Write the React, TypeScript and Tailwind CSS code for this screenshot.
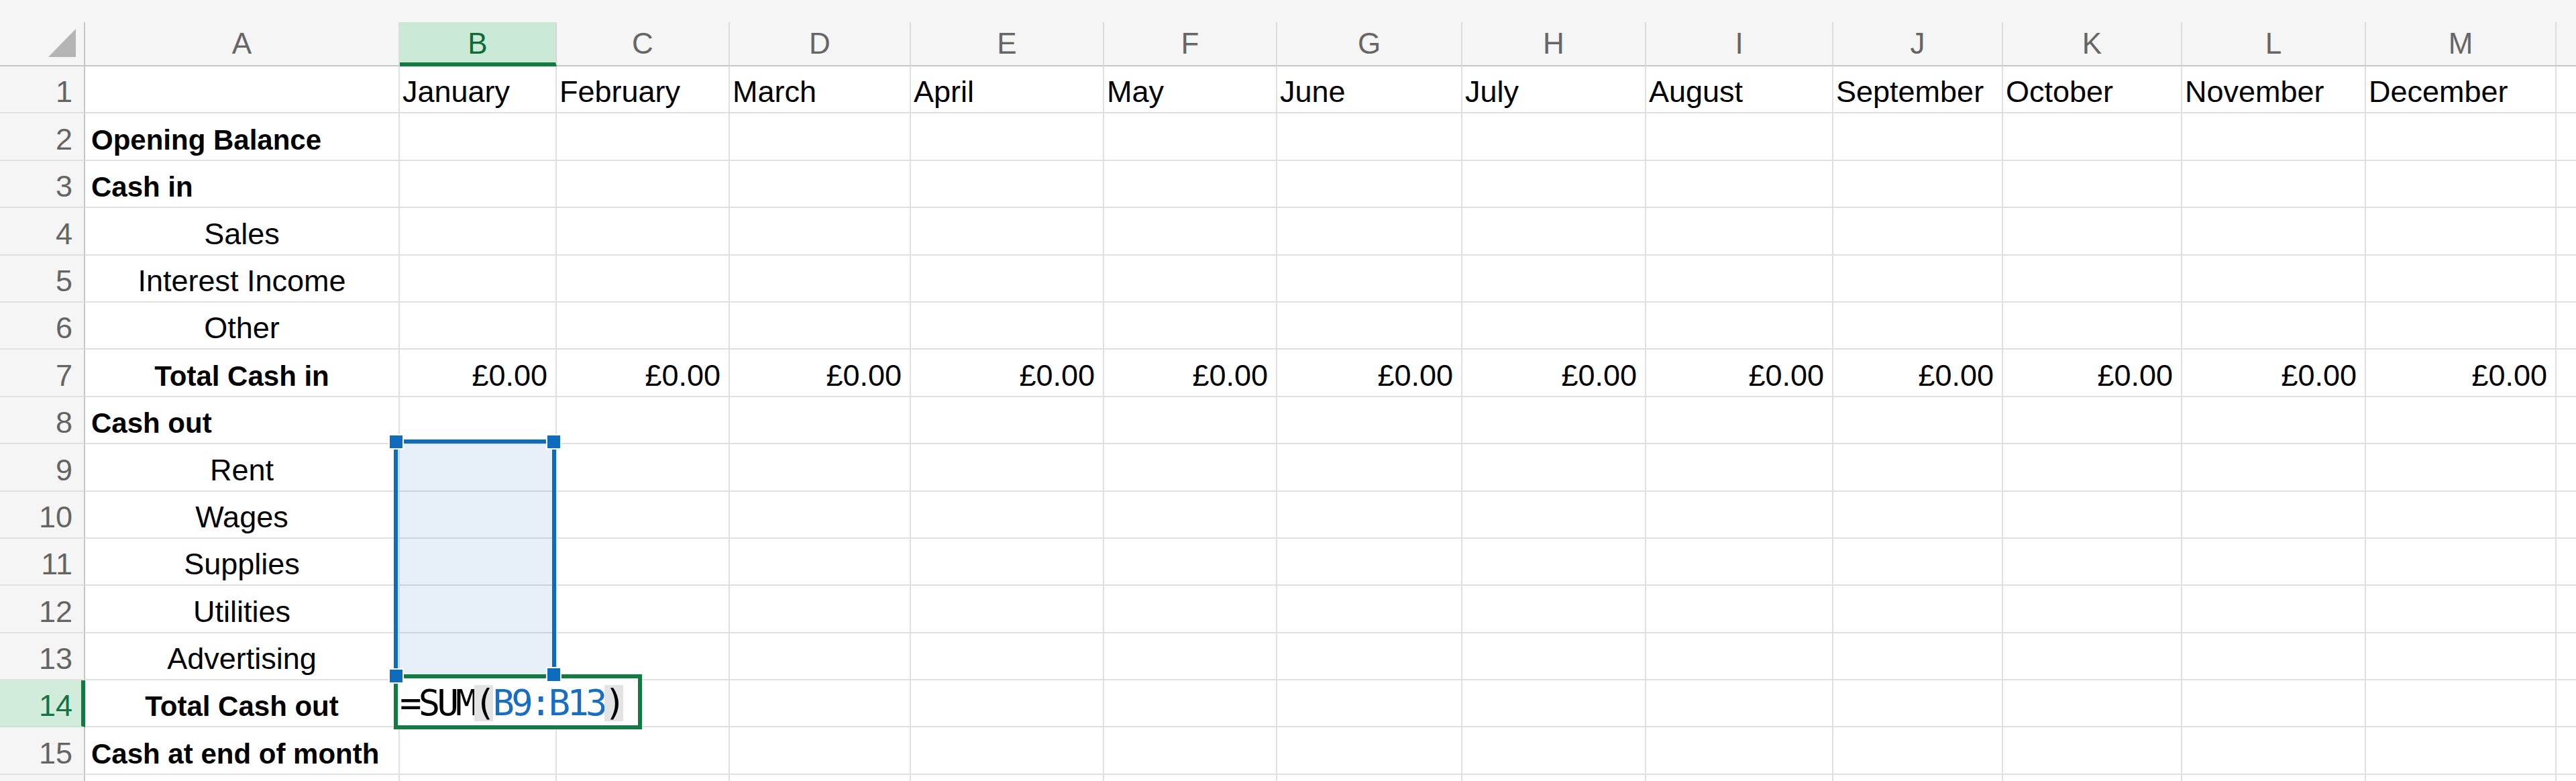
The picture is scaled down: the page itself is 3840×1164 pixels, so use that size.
import React from "react";

const COLS = [
  { key: "A", w: "w-[469px]" },
  { key: "B", w: "w-[234px]" },
  { key: "C", w: "w-[258px]" },
  { key: "D", w: "w-[270px]" },
  { key: "E", w: "w-[288px]" },
  { key: "F", w: "w-[258px]" },
  { key: "G", w: "w-[276px]" },
  { key: "H", w: "w-[274px]" },
  { key: "I", w: "w-[279px]" },
  { key: "J", w: "w-[253px]" },
  { key: "K", w: "w-[267px]" },
  { key: "L", w: "w-[274px]" },
  { key: "M", w: "w-[284px]" },
];

const MONTHS = [
  "January", "February", "March", "April", "May", "June",
  "July", "August", "September", "October", "November", "December",
];

type Label = { text: string; bold?: boolean; align: "left" | "center" };

// last row is only a sliver at the bottom edge, so it has no number
const ROWS: { label?: Label; months?: boolean; totals?: boolean; sliver?: boolean }[] = [
  { months: true },
  { label: { text: "Opening Balance", bold: true, align: "left" } },
  { label: { text: "Cash in", bold: true, align: "left" } },
  { label: { text: "Sales", align: "center" } },
  { label: { text: "Interest Income", align: "center" } },
  { label: { text: "Other", align: "center" } },
  { label: { text: "Total Cash in", bold: true, align: "center" }, totals: true },
  { label: { text: "Cash out", bold: true, align: "left" } },
  { label: { text: "Rent", align: "center" } },
  { label: { text: "Wages", align: "center" } },
  { label: { text: "Supplies", align: "center" } },
  { label: { text: "Utilities", align: "center" } },
  { label: { text: "Advertising", align: "center" } },
  { label: { text: "Total Cash out", bold: true, align: "center" } },
  { label: { text: "Cash at end of month", bold: true, align: "left" } },
  { sliver: true },
];

function Handle({ className }: { className: string }) {
  return (
    <div className={`absolute h-[19px] w-[19px] bg-[#0f6cbd] outline-2 outline-white ${className}`} />
  );
}

export default function App() {
  return (
    <div className="relative h-[1164px] w-[3840px] overflow-hidden bg-[#f5f5f5] font-['Liberation_Sans',Arial,sans-serif] text-black">
      <div className="h-[33px]" />

      {/* column headers */}
      <div className="flex h-[66px]">
        <div className="flex w-[127px] shrink-0 items-end justify-end border-r-2 border-b-2 border-[#c6c6c6] pr-[12px] pb-[12px]">
          <svg width="41" height="42" viewBox="0 0 41 42">
            <polygon points="41,0 41,42 0,42" fill="#b4b4b4" />
          </svg>
        </div>
        {COLS.map(c => (
          <div
            key={c.key}
            className={
              c.key === "B"
                ? `${c.w} flex shrink-0 items-center justify-center border-b-[6px] border-b-[#107c41] border-r-2 border-r-[#d8d8d8] bg-[#cae9d6] pt-[4px] text-[44px] leading-none text-[#0e6b37]`
                : `${c.w} flex shrink-0 items-center justify-center border-r-2 border-r-[#dcdcdc] border-b-2 border-b-[#c6c6c6] text-[44px] leading-none text-[#666666]`
            }
          >
            {c.key}
          </div>
        ))}
        <div className="flex-1 border-b-2 border-[#c6c6c6]" />
      </div>

      {/* rows */}
      {ROWS.map((row, i) => {
        const n = i + 1;
        const active = n === 14;
        return (
          <div key={n} className="flex h-[70.4px]">
            <div
              className={
                active
                  ? "flex w-[127px] shrink-0 items-end justify-end border-r-[6px] border-r-[#107c41] border-b-2 border-b-[#c6e3d1] bg-[#d2ecdc] pr-[13px] pb-[8px] text-[45px] leading-none text-[#157244]"
                  : "flex w-[127px] shrink-0 items-end justify-end border-r-2 border-r-[#c6c6c6] border-b-2 border-b-[#e0e0e0] pr-[17px] pb-[8px] text-[45px] leading-none text-[#646464]"
              }
            >
              {row.sliver ? null : n}
            </div>
            {COLS.map((c, ci) => {
              let content: React.ReactNode = null;
              let align = "justify-start pl-[8px]";
              let weight = "text-[45px] font-normal";
              if (c.key === "A" && row.label) {
                content = row.label.text;
                align = row.label.align === "center" ? "justify-center" : "justify-start pl-[9px]";
                weight = row.label.bold ? "text-[42px] font-bold" : "text-[45px] font-normal";
              } else if (c.key !== "A" && row.months) {
                content = MONTHS[ci - 1];
                align = "justify-start pl-[4px]";
              } else if (c.key !== "A" && row.totals) {
                content = "£0.00";
                align = "justify-end pr-[12px]";
              }
              return (
                <div
                  key={c.key}
                  className={`${c.w} flex shrink-0 items-end overflow-visible whitespace-nowrap border-r-2 border-b-2 border-[#e0e0e0] bg-white pb-[8px] leading-none ${align} ${weight}`}
                >
                  {content}
                </div>
              );
            })}
            <div className="flex-1 border-b-2 border-[#e0e0e0] bg-white" />
          </div>
        );
      })}

      {/* selected range B9:B13 */}
      <div className="absolute left-[587px] top-[655px] h-[356px] w-[242px] border-[6px] border-[#0f6cbd] bg-[#0f6cbd]/10" />

      {/* cell being edited: B14 */}
      <div className="absolute left-[587px] top-[1005px] flex h-[82px] w-[370px] items-end border-[6px] border-[#107c41] bg-white pb-[6px] pl-[3px] font-['DejaVu_Sans_Mono',monospace] text-[54px] leading-none tracking-[-4.8px] whitespace-nowrap">
        <span>=SUM</span>
        <span className="bg-[#e3e3e3]">(</span>
        <span className="text-[#1a6ec2]">B9:B13</span>
        <span className="bg-[#e3e3e3]">)</span>
      </div>

      <Handle className="left-[581px] top-[649px]" />
      <Handle className="left-[816px] top-[649px]" />
      <Handle className="left-[581px] top-[998px]" />
      <Handle className="left-[816px] top-[996px] h-[10px]" />
    </div>
  );
}
